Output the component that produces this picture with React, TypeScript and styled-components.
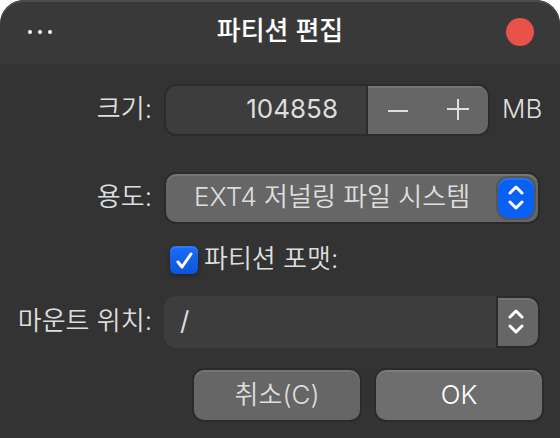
import React, { useState } from 'react';
import styled, { createGlobalStyle, css } from 'styled-components';

const GlobalStyle = createGlobalStyle`
  *, *::before, *::after { box-sizing: border-box; }
  body { margin: 0; background: #fff; }
  body, button, input, select {
    font-family: Inter, "Noto Sans CJK KR", sans-serif;
    font-size: 26px;
    font-weight: 350;
    line-height: 32px;
    color: #dedede;
  }
`;

const Dialog = styled.main`
  display: flex;
  flex-direction: column;
  min-height: 100vh;
  overflow: hidden;
  border-radius: 24px 24px 0 0;
  background: #333;
`;

const TitleBar = styled.header`
  display: grid;
  grid-template-columns: 1fr auto 1fr;
  align-items: center;
  height: 64px;
  padding: 0 26px;
  border-radius: 24px 24px 0 0;
  background: #393939;
  box-shadow: inset 0 2px #4d4d4d;
`;

const Title = styled.h1`
  margin: 0;
  padding-bottom: 2px;
  font-size: 26px;
  font-weight: 500;
  line-height: 32px;
  color: #fff;
`;

const bare = css`
  margin: 0;
  padding: 0;
  border: 0;
  outline: 0;
  background: none;
`;

const MenuButton = styled.button`
  ${bare}
  display: flex;
  justify-self: start;
`;

const CloseButton = styled.button`
  ${bare}
  justify-self: end;
  width: 28px;
  height: 28px;
  border-radius: 50%;
  background: #e9524a;
`;

const Form = styled.form`
  display: flex;
  flex-direction: column;
  gap: 20px;
  padding: 20px 16px 16px;
`;

const Fields = styled.div`
  display: grid;
  grid-template-columns: 136px minmax(0, 1fr);
  column-gap: 12px;
  row-gap: 22px;
  align-items: center;
  padding-right: 4px;
`;

const SizeFields = styled(Fields)`
  margin-bottom: 16px;
`;

const Label = styled.label`
  padding-bottom: 2px;
  text-align: right;
  white-space: nowrap;
`;

const SizeRow = styled.div`
  display: flex;
  align-items: center;
  gap: 12px;
`;

const Spinner = styled.div`
  display: flex;
  flex: 1;
  min-width: 0;
  height: 52px;
  overflow: hidden;
  border: 2px solid #2b2b2b;
  border-radius: 12px;
  background: #3d3d3d;
`;

const TextInput = styled.input<{ $end?: boolean }>`
  ${bare}
  flex: 1;
  min-width: 0;
  padding: ${(p) => (p.$end ? '0 28px 2px 16px' : '0 16px 2px')};
  font-weight: 400;
  text-align: ${(p) => (p.$end ? 'right' : 'left')};
`;

const StepGroup = styled.div`
  display: flex;
  width: 122px;
  border-left: 2px solid #2b2b2b;
  background: #666;
  box-shadow: inset 0 2px #757575;
`;

const StepButton = styled.button`
  ${bare}
  display: flex;
  flex: 1;
  align-items: center;
  justify-content: center;
`;

const Unit = styled.span`
  width: 38px;
  padding-bottom: 2px;
`;

const SelectBox = styled.div`
  display: flex;
  align-items: center;
  height: 52px;
  padding-right: 4px;
  border: 2px solid #2b2b2b;
  border-radius: 12px;
  background: #666;
  box-shadow: inset 0 2px #757575;
`;

const Select = styled.select`
  ${bare}
  flex: 1;
  min-width: 0;
  height: 48px;
  padding: 0 0 2px 28px;
  appearance: none;
`;

const SelectKnob = styled.span`
  display: flex;
  align-items: center;
  justify-content: center;
  width: 36px;
  height: 40px;
  border-radius: 10px;
  background: #0a60f5;
  box-shadow: 0 0 0 2px #565656, inset 0 2px #2672f7;
`;

const CheckRow = styled.div`
  display: flex;
  grid-column: 2;
  align-items: center;
  gap: 6px;
  height: 28px;
  padding-left: 6px;
`;

const CheckMark = styled.span`
  display: grid;
  border-radius: 6px;
  box-shadow: 0 2px 4px #222;

  & > * { grid-area: 1 / 1; }
  & > svg { pointer-events: none; visibility: hidden; }
  & > input:checked + svg { visibility: visible; }
`;

const CheckBox = styled.input`
  ${bare}
  width: 28px;
  height: 28px;
  appearance: none;
  border-radius: 6px;
  background: #666;

  &:checked {
    background: linear-gradient(#1d6cf8, #0a55dc);
    box-shadow: inset 0 2px #2f78f8;
  }
`;

const ComboBox = styled.div`
  display: flex;
  height: 52px;
  border-radius: 12px;
  background: #3d3d3d;
`;

const ComboButton = styled.button`
  ${bare}
  display: flex;
  align-items: center;
  justify-content: center;
  width: 44px;
  padding-right: 4px;
  border: 2px solid #2b2b2b;
  border-radius: 0 12px 12px 0;
  background: #666;
  box-shadow: inset 0 2px #757575;
`;

const Actions = styled.div`
  display: flex;
  justify-content: flex-end;
  gap: 12px;
`;

const ActionButton = styled.button<{ $primary?: boolean }>`
  ${bare}
  width: 170px;
  height: 54px;
  border: 2px solid #2b2b2b;
  border-radius: 12px;
  background: ${(p) => (p.$primary ? '#6e6e6e' : '#666')};
  box-shadow: inset 0 2px ${(p) => (p.$primary ? '#7c7c7c' : '#757575')};
  color: ${(p) => (p.$primary ? '#fff' : '#dedede')};
`;

const Chevrons = () => (
  <svg width="18" height="28" viewBox="0 0 18 28" fill="none" stroke="#fff" strokeWidth="3" strokeLinecap="round" strokeLinejoin="round" aria-hidden="true">
    <path d="M3 9 9 3l6 6M3 18l6 6 6-6" />
  </svg>
);

export default function App() {
  const [size, setSize] = useState(104858);
  const [mount, setMount] = useState('/');

  return (
    <>
      <GlobalStyle />
      <Dialog>
        <TitleBar>
          <MenuButton aria-label="메뉴">
            <svg width="28" height="8" viewBox="0 0 28 8" fill="#fff" aria-hidden="true">
              <circle cx="4" cy="4" r="2" />
              <circle cx="14" cy="4" r="2" />
              <circle cx="24" cy="4" r="2" />
            </svg>
          </MenuButton>
          <Title>파티션 편집</Title>
          <CloseButton aria-label="닫기" />
        </TitleBar>
        <Form onSubmit={(e) => e.preventDefault()}>
          <SizeFields>
            <Label htmlFor="size">크기:</Label>
            <SizeRow>
              <Spinner>
                <TextInput id="size" $end inputMode="numeric" value={size} onChange={(e) => setSize(Number(e.target.value) || 0)} />
                <StepGroup>
                  <StepButton type="button" aria-label="줄이기" onClick={() => setSize(size - 1)}>
                    <svg width="22" height="22" viewBox="0 0 22 22" stroke="#dedede" strokeWidth="2" aria-hidden="true">
                      <path d="M1 12h20" />
                    </svg>
                  </StepButton>
                  <StepButton type="button" aria-label="늘리기" onClick={() => setSize(size + 1)}>
                    <svg width="22" height="22" viewBox="0 0 22 22" stroke="#dedede" strokeWidth="2" aria-hidden="true">
                      <path d="M0 10h22M11 0v21" />
                    </svg>
                  </StepButton>
                </StepGroup>
              </Spinner>
              <Unit>MB</Unit>
            </SizeRow>
          </SizeFields>
          <Fields>
            <Label htmlFor="usage">용도:</Label>
            <SelectBox>
              <Select id="usage">
                <option>EXT4 저널링 파일 시스템</option>
              </Select>
              <SelectKnob><Chevrons /></SelectKnob>
            </SelectBox>

            <CheckRow>
              <CheckMark>
                <CheckBox id="format" type="checkbox" defaultChecked />
                <svg width="28" height="28" viewBox="0 0 28 28" fill="none" stroke="#fff" strokeWidth="3" strokeLinecap="round" strokeLinejoin="round" aria-hidden="true">
                  <path d="M8 16l4 5 9-13" />
                </svg>
              </CheckMark>
              <Label htmlFor="format">파티션 포맷:</Label>
            </CheckRow>

            <Label htmlFor="mount">마운트 위치:</Label>
            <ComboBox>
              <TextInput id="mount" value={mount} onChange={(e) => setMount(e.target.value)} />
              <ComboButton type="button" aria-label="마운트 위치 목록"><Chevrons /></ComboButton>
            </ComboBox>
          </Fields>
          <Actions>
            <ActionButton type="button">취소(C)</ActionButton>
            <ActionButton type="submit" $primary>OK</ActionButton>
          </Actions>
        </Form>
      </Dialog>
    </>
  );
}
